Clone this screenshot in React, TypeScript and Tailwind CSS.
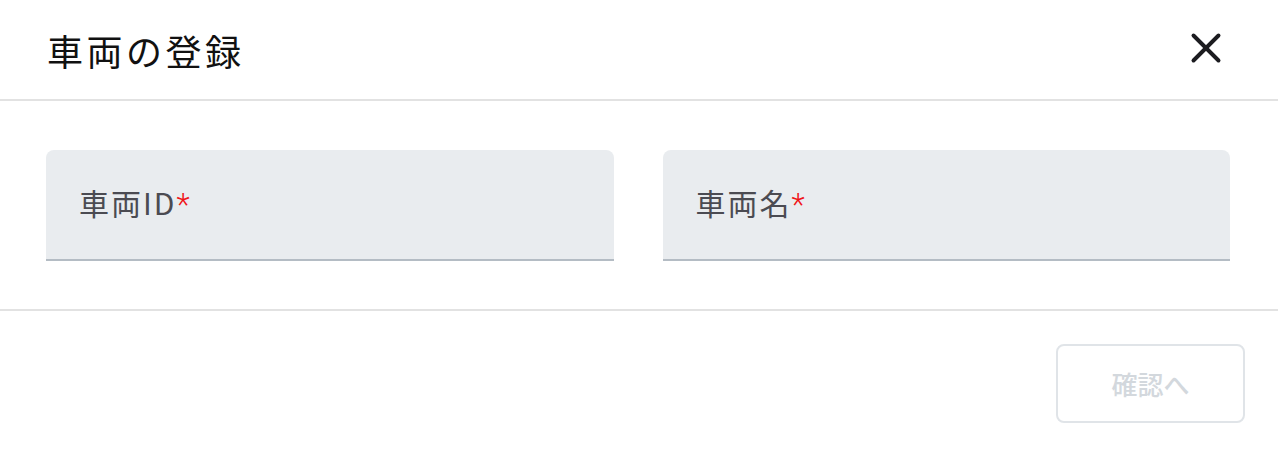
import { X } from "lucide-react";

const font = { fontFamily: '"Noto Sans CJK JP", "Noto Sans", sans-serif' };

function Field({ label }: { label: string }) {
  return (
    <div className="flex h-[111px] flex-1 items-center rounded-t-lg border-b-2 border-[#b4bcc4] bg-[#e9ecef] px-[33px]">
      <span className="text-[30px] font-normal tracking-[2px] text-[#4b4b52]">
        {label}
        <span className="font-['Roboto'] text-[31px] font-light text-[#f01418]">*</span>
      </span>
    </div>
  );
}

export default function App() {
  return (
    <div className="h-[454px] w-[1278px] bg-white" style={font}>
      <div className="flex h-[101px] items-center justify-between border-b-2 border-[#e2e2e2] pl-[47px] pr-[47px]">
        <h1 className="text-[36px] font-normal tracking-[3.5px] text-[#111]">車両の登録</h1>
        <X className="-mt-[3px] h-[50px] w-[50px] text-[#1c1c20]" strokeWidth={1.9} />
      </div>
      <div className="flex h-[210px] gap-[49px] border-b-2 border-[#e2e2e2] pl-[46px] pr-[48px] pt-[49px]">
        <Field label="車両ID" />
        <Field label="車両名" />
      </div>
      <div className="flex justify-end pr-[33px] pt-[33px]">
        <button className="flex h-[79px] w-[189px] items-center justify-center rounded-lg border-2 border-[#e0e4e8] text-[26px] font-medium text-[#d3d8dd]">
          確認へ
        </button>
      </div>
    </div>
  );
}
